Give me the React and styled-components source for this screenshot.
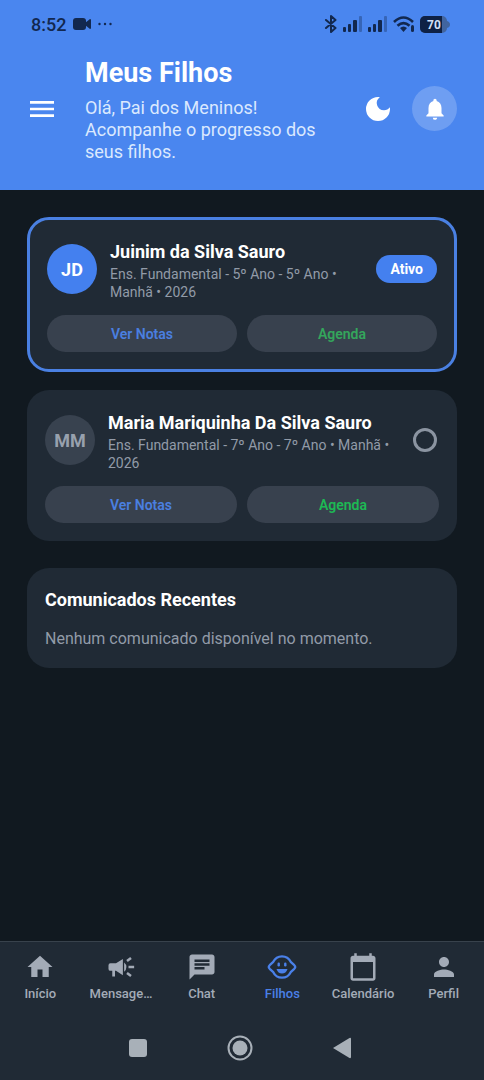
import React, { useState } from "react";
import styled, { createGlobalStyle } from "styled-components";
import {
  MdCalendarToday,
  MdChat,
  MdDarkMode,
  MdHome,
  MdMenu,
  MdNotifications,
  MdPerson,
} from "react-icons/md";

const MegaphoneIcon = ({ size }) => (
  <svg width={size} height={size} viewBox="0 0 24 24" fill="currentColor">
    <path d="M3.500 9Q2 9 2 10.500v3Q2 15 3.500 15H5v4.500h2.200V15H8l5.500 3.500v-13L8 9z" />
    <path d="M14.500 8.300q1.800 1.400 1.800 3.700t-1.800 3.700z" />
    <path d="M18 11h4.500v2H18zM16.200 17.600l1.200-1.600 3.200 2.400-1.200 1.600zM20.600 5.600L19.400 4l-3.200 2.400L17.400 8z" />
  </svg>
);

const BabyIcon = ({ size }) => (
  <svg width={size} height={size} viewBox="0 0 30 30" fill="currentColor">
    <path
      d="M15 4.300c4 0 7 2 8.700 5.500l3.600 3.400q1.800 1.800 0 3.600l-3.600 3.400c-1.700 3.500-4.700 5.500-8.700 5.500s-7-2-8.700-5.500l-3.600-3.400q-1.800-1.800 0-3.600l3.600-3.400C8 6.300 11 4.300 15 4.300z"
      fill="none"
      stroke="currentColor"
      strokeWidth="2.300"
      strokeLinejoin="round"
    />
    <rect x="10.500" y="10.500" width="2.400" height="4" rx="1.200" />
    <rect x="17.100" y="10.500" width="2.400" height="4" rx="1.200" />
    <path d="M9.500 17h11q-1.500 4.500-5.500 4.500T9.500 17z" />
  </svg>
);

const students = [
  {
    id: 1,
    initials: "JD",
    name: "Juinim da Silva Sauro",
    info: "Ens. Fundamental - 5º Ano - 5º Ano • Manhã • 2026",
  },
  {
    id: 2,
    initials: "MM",
    name: "Maria Mariquinha Da Silva Sauro",
    info: "Ens. Fundamental - 7º Ano - 7º Ano • Manhã • 2026",
  },
];

const tabs = [
  { label: "Início", icon: MdHome },
  { label: "Mensage…", icon: MegaphoneIcon },
  { label: "Chat", icon: MdChat },
  { label: "Filhos", icon: BabyIcon },
  { label: "Calendário", icon: MdCalendarToday },
  { label: "Perfil", icon: MdPerson },
];

const SignalIcon = () => (
  <svg width="20" height="16" viewBox="0 0 20 16" fill="currentColor">
    <rect x="0" y="11" width="3" height="5" rx="1" />
    <rect x="5" y="8" width="3" height="8" rx="1" />
    <rect x="10" y="4" width="4" height="12" rx="1" />
    <rect x="16" y="0" width="3" height="16" rx="1" opacity="0.35" />
  </svg>
);

const StatusBar = () => (
  <Status>
    <Clock>8:52</Clock>
    <svg width="18" height="12" viewBox="0 0 18 12" fill="currentColor">
      <rect width="13" height="12" rx="3" />
      <path d="M12 5l5-4q1 0 1 1v8q0 1-1 1l-5-4z" />
    </svg>
    <svg width="14" height="4" viewBox="0 0 14 4" fill="currentColor">
      <circle cx="1.5" cy="2" r="1.2" />
      <circle cx="7" cy="2" r="1.2" />
      <circle cx="12.5" cy="2" r="1.2" />
    </svg>
    <StatusIcons>
      <svg
        width="14"
        height="18"
        viewBox="0 0 14 18"
        fill="none"
        stroke="currentColor"
        strokeWidth="2"
        strokeLinejoin="round"
        strokeLinecap="round"
      >
        <path d="M2 5l9.500 8L7 17V1l4.500 4L2 13" />
      </svg>
      <SignalIcon />
      <SignalIcon />
      <svg width="22" height="17" viewBox="0 0 22 17">
        <g fill="none" stroke="currentColor" strokeWidth="2.600">
          <path d="M1 6q9.500-9 19 0" />
          <path d="M4.500 9.800q6-5.500 12 0" />
        </g>
        <path d="M7 12q3.500-3 7 0l-3.500 4z" fill="currentColor" />
        <rect x="18" y="9" width="3" height="7" rx="1.500" fill="currentColor" />
      </svg>
      <svg width="30" height="17" viewBox="0 0 30 17">
        <rect width="27" height="17" rx="5" fill="#41649f" />
        <path d="M27 5q3 1 3 3.500T27 12z" fill="#41649f" />
        <path d="M5 0h17v17H5a5 5 0 0 1-5-5V5a5 5 0 0 1 5-5z" fill="#0e2145" />
        <text
          x="14"
          y="13"
          textAnchor="middle"
          fill="#d3e0f7"
          fontSize="12"
          fontWeight="700"
        >
          70
        </text>
      </svg>
    </StatusIcons>
  </Status>
);

const StudentCard = ({ student, active, onSelect }) => (
  <Card $active={active}>
    <StudentRow>
      <Avatar $active={active}>{student.initials}</Avatar>
      <StudentText>
        <StudentName>{student.name}</StudentName>
        <StudentInfo>{student.info}</StudentInfo>
      </StudentText>
      {active ? (
        <Badge>Ativo</Badge>
      ) : (
        <Radio
          type="radio"
          name="student"
          aria-label={student.name}
          checked={false}
          onChange={() => onSelect(student.id)}
        />
      )}
    </StudentRow>
    <Actions>
      <ActionButton $color="#4a7fe0">Ver Notas</ActionButton>
      <ActionButton $color={active ? "#34a65c" : "#1db954"}>
        Agenda
      </ActionButton>
    </Actions>
  </Card>
);

const App = () => {
  const [activeId, setActiveId] = useState(1);
  const [tab, setTab] = useState("Filhos");

  return (
    <Page>
      <GlobalStyle />
      <Header>
        <StatusBar />
        <HeaderRow>
          <IconButton aria-label="Menu">
            <MdMenu size={32} />
          </IconButton>
          <HeaderText>
            <Title>Meus Filhos</Title>
            <Greeting>
              Olá, Pai dos Meninos! Acompanhe o progresso dos seus filhos.
            </Greeting>
          </HeaderText>
          <IconButton aria-label="Tema escuro">
            <MdDarkMode size={32} />
          </IconButton>
          <BellButton aria-label="Notificações">
            <MdNotifications size={26} />
          </BellButton>
        </HeaderRow>
      </Header>

      <Content>
        <Students>
          {students.map((s) => (
            <StudentCard
              key={s.id}
              student={s}
              active={s.id === activeId}
              onSelect={setActiveId}
            />
          ))}
        </Students>
        <Card as="section">
          <SectionTitle>Comunicados Recentes</SectionTitle>
          <Empty>Nenhum comunicado disponível no momento.</Empty>
        </Card>
      </Content>

      <Footer>
        <TabBar>
          {tabs.map(({ label, icon: Icon }) => (
            <Tab
              key={label}
              $active={label === tab}
              onClick={() => setTab(label)}
            >
              <Icon size={30} />
              <span>{label}</span>
            </Tab>
          ))}
        </TabBar>
        <SystemBar>
          <SystemButton aria-label="Recentes">
            <svg width="26" height="26" viewBox="0 0 26 26" fill="currentColor">
              <rect x="4" y="4" width="18" height="18" rx="3" />
            </svg>
          </SystemButton>
          <SystemButton aria-label="Tela inicial">
            <svg width="26" height="26" viewBox="0 0 26 26" fill="currentColor">
              <circle
                cx="13"
                cy="13"
                r="11.500"
                fill="none"
                stroke="currentColor"
                strokeWidth="2"
              />
              <circle cx="13" cy="13" r="7.500" />
            </svg>
          </SystemButton>
          <SystemButton aria-label="Voltar">
            <svg width="26" height="26" viewBox="0 0 26 26" fill="currentColor">
              <path d="M4 13L20.500 3q1.500-.6 1.500 1v18q0 1.600-1.500 1z" />
            </svg>
          </SystemButton>
        </SystemBar>
      </Footer>
    </Page>
  );
};

const GlobalStyle = createGlobalStyle`
  * {
    box-sizing: border-box;
    margin: 0;
  }

  body {
    background-color: #111920;
    color: #fff;
    font-family: Roboto, "Liberation Sans", sans-serif;
  }

  button {
    border: none;
    padding: 0;
    background: none;
    color: inherit;
    font-family: inherit;
    cursor: pointer;
  }

  svg {
    display: block;
    flex-shrink: 0;
  }
`;

const Page = styled.div`
  display: flex;
  flex-direction: column;
  min-height: 100vh;
`;

const Header = styled.header`
  background-color: #4a86ef;
  padding-bottom: 27px;
`;

const Status = styled.div`
  display: flex;
  align-items: center;
  gap: 7px;
  height: 48px;
  padding: 0 34px 0 31px;
  color: #12284f;
`;

const Clock = styled.span`
  font-size: 18px;
  font-weight: 500;
`;

const StatusIcons = styled.div`
  display: flex;
  align-items: center;
  gap: 5px;
  margin-left: auto;
`;

const HeaderRow = styled.div`
  display: flex;
  align-items: center;
  padding: 6px 27px 0 26px;
`;

const HeaderText = styled.div`
  flex: 1;
  padding: 3px 24px 0 27px;
`;

const Title = styled.h1`
  font-size: 27px;
  font-weight: 700;
  line-height: 32px;
`;

const Greeting = styled.p`
  margin-top: 8px;
  color: #dbe9fe;
  font-size: 18px;
  line-height: 22px;
`;

const IconButton = styled.button`
  display: flex;
  align-items: center;
  justify-content: center;
`;

const BellButton = styled(IconButton)`
  width: 45px;
  height: 45px;
  margin-left: 18px;
  border-radius: 50%;
  background-color: rgb(255 255 255 / 20%);
`;

const Content = styled.main`
  flex: 1;
  padding: 27px;
`;

const Students = styled.div`
  display: flex;
  flex-direction: column;
  gap: 18px;
  margin-bottom: 27px;
`;

const Card = styled.article`
  padding: ${({ $active }) => ($active ? "17px" : "18px")};
  border: ${({ $active }) => ($active ? "3px solid #4a80e2" : "none")};
  border-radius: 22px;
  background-color: #202a35;
`;

const StudentRow = styled.div`
  display: flex;
  align-items: center;
  min-height: 64px;
`;

const Avatar = styled.div`
  display: flex;
  align-items: center;
  justify-content: center;
  flex-shrink: 0;
  width: 50px;
  height: 50px;
  border-radius: 50%;
  background-color: ${({ $active }) => ($active ? "#4480ef" : "#38424f")};
  color: ${({ $active }) => ($active ? "#fff" : "#98a1ae")};
  font-size: 18px;
  font-weight: 700;
`;

const StudentText = styled.div`
  flex: 1;
  padding: 3px 13px 0;
`;

const StudentName = styled.h2`
  font-size: 18px;
  font-weight: 700;
  line-height: 24px;
`;

const StudentInfo = styled.p`
  margin-top: 1px;
  color: #929ba8;
  font-size: 14px;
  line-height: 18px;
`;

const Badge = styled.span`
  padding: 0 14px;
  border-radius: 14px;
  background-color: #4480ef;
  font-size: 14px;
  font-weight: 700;
  line-height: 28px;
`;

const Radio = styled.input`
  appearance: none;
  flex-shrink: 0;
  width: 24px;
  height: 24px;
  margin: 0 2px 0 0;
  border: 3px solid #8b94a1;
  border-radius: 50%;
  cursor: pointer;
`;

const Actions = styled.div`
  display: flex;
  gap: 10px;
  margin-top: 14px;
`;

const ActionButton = styled.button`
  flex: 1;
  height: 37px;
  border-radius: 19px;
  background-color: #38414e;
  color: ${({ $color }) => $color};
  font-size: 14px;
  font-weight: 600;
`;

const SectionTitle = styled.h2`
  font-size: 18px;
  font-weight: 700;
  line-height: 28px;
`;

const Empty = styled.p`
  margin-top: 14px;
  color: #929ba8;
  font-size: 16px;
  line-height: 22px;
`;

const Footer = styled.footer`
  position: sticky;
  bottom: 0;
  border-top: 1px solid #38424c;
  background-color: #202a35;
`;

const TabBar = styled.nav`
  display: flex;
  padding-top: 10px;
`;

const Tab = styled.button`
  display: flex;
  flex-direction: column;
  align-items: center;
  gap: 4px;
  flex: 1 1 0;
  min-width: 0;
  color: ${({ $active }) => ($active ? "#4a80e8" : "#a3abb7")};
  font-size: 13px;
  font-weight: 500;
  line-height: 16px;
`;

const SystemBar = styled.div`
  display: flex;
  justify-content: center;
  gap: 76px;
  padding: 33px 4px 19px 0;
  color: #a8b0b8;
`;

const SystemButton = styled.button`
  display: flex;
`;

export default App;
